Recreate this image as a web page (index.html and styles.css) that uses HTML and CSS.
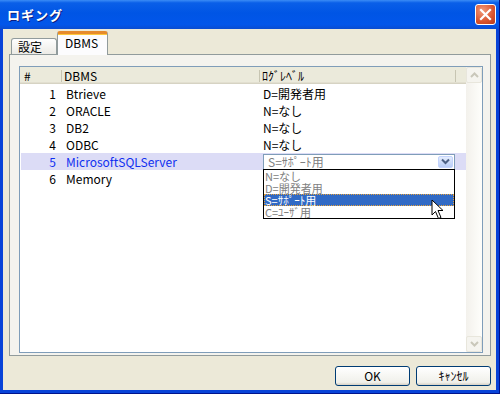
FILE: index.html
```html
<!DOCTYPE html>
<html lang="ja">
<head>
  <meta charset="UTF-8">
  <title>ロギング</title>
  <link rel="stylesheet" href="styles.css">
</head>
<body>
  <div class="window">
    <div class="titlebar">
      <span class="title">ロギング</span>
      <span class="close">
        <svg width="13" height="13" viewBox="0 0 13 13"><path d="M2 2 L11 11 M11 2 L2 11" stroke="#fff" stroke-width="2.2" stroke-linecap="square"/></svg>
      </span>
    </div>
    <div class="body">
      <div class="tabs">
        <div class="tab">設定</div>
        <div class="tab active">DBMS</div>
      </div>
      <div class="panel">
        <div class="list">
          <div class="grid">
            <div class="row head">
              <div class="c-num">#</div>
              <div class="c-name">DBMS</div>
              <div class="c-level">ﾛｸﾞﾚﾍﾞﾙ</div>
              <div class="c-fill"></div>
            </div>
            <div class="row"><div class="c-num">1</div><div class="c-name">Btrieve</div><div class="c-level">D=開発者用</div></div>
            <div class="row"><div class="c-num">2</div><div class="c-name">ORACLE</div><div class="c-level">N=なし</div></div>
            <div class="row"><div class="c-num">3</div><div class="c-name">DB2</div><div class="c-level">N=なし</div></div>
            <div class="row"><div class="c-num">4</div><div class="c-name">ODBC</div><div class="c-level">N=なし</div></div>
            <div class="row selected">
              <div class="c-num">5</div>
              <div class="c-name">MicrosoftSQLServer</div>
              <div class="c-level">
                <div class="combo">
                  <span>S=ｻﾎﾟｰﾄ用</span>
                  <span class="combo-btn">
                    <svg width="9" height="7" viewBox="0 0 9 7"><path d="M1 1.5 L4.5 5 L8 1.5" fill="none" stroke="#4D6185" stroke-width="2"/></svg>
                  </span>
                </div>
              </div>
            </div>
            <div class="row"><div class="c-num">6</div><div class="c-name">Memory</div><div class="c-level"></div></div>
          </div>
          <div class="scrollbar">
            <div class="sb-btn">
              <svg width="9" height="6" viewBox="0 0 9 6"><path d="M1 5 L4.5 1.5 L8 5" fill="none" stroke="#C9C7BA" stroke-width="2"/></svg>
            </div>
            <div class="sb-track"></div>
            <div class="sb-btn">
              <svg width="9" height="6" viewBox="0 0 9 6"><path d="M1 1 L4.5 4.5 L8 1" fill="none" stroke="#C9C7BA" stroke-width="2"/></svg>
            </div>
          </div>
          <ul class="dropdown">
            <li>N=なし</li>
            <li>D=開発者用</li>
            <li class="picked">S=ｻﾎﾟｰﾄ用</li>
            <li>C=ﾕｰｻﾞ用</li>
          </ul>
          <svg class="cursor" width="14" height="22" viewBox="0 0 14 22">
            <path d="M1 1 L1 16 L4.5 12.5 L7.5 19.5 L10 18.5 L7 11.5 L12 11.5 Z" fill="#fff" stroke="#000" stroke-width="1"/>
          </svg>
        </div>
      </div>
      <div class="buttons">
        <button>OK</button>
        <button>ｷｬﾝｾﾙ</button>
      </div>
    </div>
  </div>
</body>
</html>
```

FILE: styles.css
```css
body {
  margin: 0;
  font-family: "Noto Sans CJK JP", sans-serif;
  font-size: 12px;
  color: #000;
}
.window {
  width: 500px;
  height: 394px;
  box-sizing: border-box;
  display: flex;
  flex-direction: column;
  background: #0843D8;
  border-bottom: 1px solid #00138C;
  border-right: 1px solid #00138C;
}
.titlebar {
  height: 29px;
  display: flex;
  align-items: center;
  justify-content: space-between;
  padding: 0 3px 0 7px;
  background: linear-gradient(to bottom, #3B8CF6 0%, #0A5FE8 10%, #0055E5 45%, #0256EA 85%, #0A4CD0 100%);
}
.title {
  color: #fff;
  font-weight: bold;
  font-size: 13px;
  letter-spacing: 1px;
  text-shadow: 1px 1px 0 #0A1E80;
}
.close {
  width: 21px;
  height: 21px;
  box-sizing: border-box;
  border: 1px solid #fff;
  border-radius: 3px;
  background: radial-gradient(circle at 35% 30%, #F19A7A, #D8532E 60%, #B83A17);
  display: flex;
  align-items: center;
  justify-content: center;
}
.body {
  flex: 1;
  margin: 0 3px 3px 3px;
  background: #ECE9D8;
  padding: 2px 5px 4px 6px;
  display: flex;
  flex-direction: column;
}
.tabs {
  height: 23px;
  display: flex;
  align-items: flex-end;
  padding-left: 2px;
}
.tab {
  box-sizing: border-box;
  height: 16px;
  width: 46px;
  border: 1px solid #919B9C;
  border-bottom: none;
  border-radius: 3px 3px 0 0;
  background: linear-gradient(#FEFEFE, #ECEBE6);
  line-height: 15px;
  padding-left: 6px;
}
.tab.active {
  height: 24px;
  width: 51px;
  margin-bottom: -1px;
  position: relative;
  background: #FCFCFE;
  border-top: 3px solid #E68B2C;
  box-shadow: inset 0 1px 0 #FFC83C;
  line-height: 18px;
  padding-left: 7px;
}
.panel {
  height: 302px;
  box-sizing: border-box;
  border: 1px solid #919B9C;
  background: #F4F3EE;
  padding: 11px 7px 2px 9px;
  display: flex;
}
.list {
  flex: 1;
  position: relative;
  border: 1px solid #7F9DB9;
  background: #fff;
  display: flex;
}
.grid {
  flex: 1;
}
.row {
  height: 17px;
  display: grid;
  grid-template-columns: 41px 198px 196px 1fr;
  align-items: center;
  line-height: 17px;
  white-space: nowrap;
}
.c-num {
  text-align: right;
  padding-right: 5px;
}
.c-name {
  padding-left: 5px;
}
.c-level {
  padding-left: 4px;
}
.row.head {
  height: 17px;
  background: #EBEADB;
  box-shadow: inset 0 -1px 0 #D6D3C3, inset 0 -2px 0 #E2DFD0;
  margin-bottom: 1px;
}
.head .c-num {
  text-align: left;
  padding-left: 4px;
}
.head .c-name {
  border-left: 1px solid #C7C5B2;
  padding-left: 2px;
  line-height: 12px;
}
.head .c-level {
  border-left: 1px solid #C7C5B2;
  padding-left: 2px;
  line-height: 12px;
}
.head .c-fill {
  border-left: 1px solid #C7C5B2;
  height: 12px;
}
.row.selected {
  background: #DCDCF6;
  color: #1030F0;
  margin-left: 1px;
  grid-template-columns: 40px 198px 196px 1fr;
}
.combo {
  height: 16px;
  box-sizing: border-box;
  border: 1px solid #7F9DB9;
  background: #fff;
  color: #808080;
  display: flex;
  align-items: center;
  justify-content: space-between;
  padding: 0 1px 0 4px;
  line-height: 14px;
}
.combo-btn {
  width: 15px;
  height: 12px;
  border-radius: 2px;
  background: linear-gradient(#E4ECFD, #B9CDF7);
  border: 1px solid #C3D3FD;
  box-sizing: border-box;
  display: flex;
  align-items: center;
  justify-content: center;
}
.scrollbar {
  width: 16px;
  display: flex;
  flex-direction: column;
  background: linear-gradient(to right, #F3F1EC, #FEFEFB);
}
.sb-btn {
  height: 16px;
  box-sizing: border-box;
  border: 1px solid #E8E6DC;
  border-radius: 2px;
  background: #F5F4EF;
  display: flex;
  align-items: center;
  justify-content: center;
}
.sb-track {
  flex: 1;
}
.dropdown {
  position: absolute;
  left: 243px;
  top: 102px;
  width: 192px;
  box-sizing: border-box;
  margin: 0;
  padding: 0;
  list-style: none;
  border: 1px solid #000;
  background: #fff;
  color: #808080;
  font-size: 11px;
}
.dropdown li {
  height: 12px;
  line-height: 12px;
  padding-left: 1px;
  white-space: nowrap;
}
.dropdown li.picked {
  background: #316AC5;
  color: #fff;
  outline: 1px dotted #E6A23C;
  outline-offset: -1px;
}
.cursor {
  position: absolute;
  left: 411px;
  top: 132px;
}
.buttons {
  display: flex;
  justify-content: flex-end;
  gap: 6px;
  margin-top: 10px;
}
.buttons button {
  width: 75px;
  height: 20px;
  border: 1px solid #003C74;
  border-radius: 3px;
  background: linear-gradient(#FFFFFF, #F0F0EA 85%, #D6D0C5);
  font-family: "Noto Sans CJK JP", sans-serif;
  font-size: 12px;
  padding: 0;
  line-height: 16px;
}
```
